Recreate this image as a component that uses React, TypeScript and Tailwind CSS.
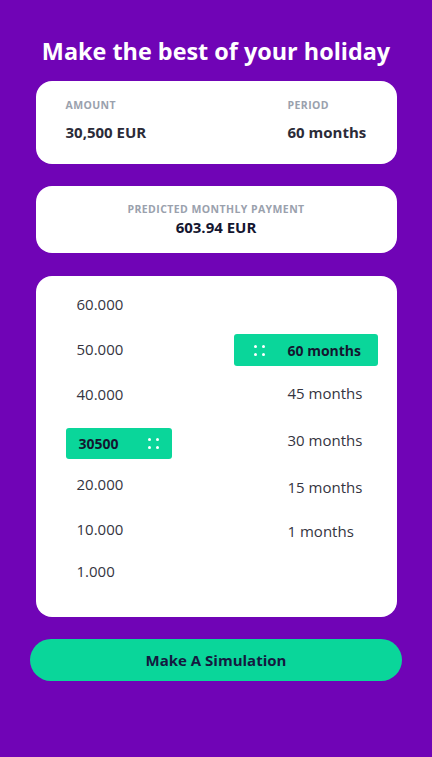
import React from "react";

const amounts = [
  { v: "60.000", h: "h-[45px]" },
  { v: "50.000", h: "h-[45px]" },
  { v: "40.000", h: "h-[45px]" },
  { v: "slider", h: "h-[45px]" },
  { v: "20.000", h: "h-[45px]" },
  { v: "10.000", h: "h-[45px]" },
  { v: "1.000", h: "h-[39px]" },
];

const periods = [
  { v: "45 months", h: "h-[42px]" },
  { v: "30 months", h: "h-[52px]" },
  { v: "15 months", h: "h-[42px]" },
  { v: "1 months", h: "h-[46px]" },
];

function Dots() {
  return (
    <div className="grid grid-cols-2 gap-x-[5px] gap-y-[5px]">
      <span className="block h-[3px] w-[3px] rounded-full bg-white" />
      <span className="block h-[3px] w-[3px] rounded-full bg-white" />
      <span className="block h-[3px] w-[3px] rounded-full bg-white" />
      <span className="block h-[3px] w-[3px] rounded-full bg-white" />
    </div>
  );
}

export default function App() {
  return (
    <div
      className="flex min-h-[757px] w-full flex-col items-center bg-[#7004b6] pt-[35px]"
      style={{ fontFamily: '"Open Sans", "Noto Sans", sans-serif' }}
    >
      <h1 className="text-[23.4px] font-bold leading-[32px] text-white">
        Make the best of your holiday
      </h1>

      {/* Amount / period summary */}
      <div className="mt-[14px] flex h-[83px] w-[361px] justify-between rounded-[16px] bg-white pl-[30px] pr-[32px] pt-[17px]">
        <div>
          <div className="text-[10.5px] font-bold uppercase tracking-[0.04em] text-[#9aa1ad]">Amount</div>
          <div className="mt-[7px] text-[15px] font-bold text-[#2b2b38]">30,500 EUR</div>
        </div>
        <div className="w-[77px] whitespace-nowrap">
          <div className="text-[10.5px] font-bold uppercase tracking-[0.04em] text-[#9aa1ad]">Period</div>
          <div className="mt-[7px] text-[15px] font-bold text-[#2b2b38]">60 months</div>
        </div>
      </div>

      {/* Predicted payment */}
      <div className="mt-[22px] flex h-[67px] w-[361px] flex-col items-center rounded-[16px] bg-white pt-[16px]">
        <div className="text-[10.5px] font-bold uppercase leading-[15px] tracking-[0.04em] text-[#9aa1ad]">
          Predicted monthly payment
        </div>
        <div className="text-[15px] font-bold leading-[20px] text-[#141630]">603.94 EUR</div>
      </div>

      {/* Sliders */}
      <div className="mt-[23px] flex h-[341px] w-[361px] rounded-[16px] bg-white pt-[6px]">
        <div className="ml-[30px] flex w-[106px] flex-col">
          {amounts.map((a) =>
            a.v === "slider" ? (
              <div key={a.v} className={`flex ${a.h} items-center pt-[8px]`}>
                <div className="flex h-[31px] w-[106px] items-center justify-between rounded-[3px] bg-[#0ad69a] pl-[13px] pr-[13px]">
                  <span className="text-[14px] font-bold text-[#141630]">30500</span>
                  <Dots />
                </div>
              </div>
            ) : (
              <div key={a.v} className={`flex ${a.h} items-center pl-[11px] text-[15px] text-[#35353f]`}>
                {a.v}
              </div>
            )
          )}
        </div>

        <div className="ml-auto mr-[19px] flex w-[144px] flex-col pt-[46px]">
          <div className="flex h-[44px] items-center">
            <div className="flex h-[32px] w-[144px] items-center rounded-[3px] bg-[#0ad69a] pl-[20px]">
              <Dots />
              <span className="ml-[23px] text-[14px] font-bold text-[#141630]">60 months</span>
            </div>
          </div>
          {periods.map((p) => (
            <div key={p.v} className={`flex ${p.h} items-center pl-[54px] text-[15px] text-[#35353f]`}>
              {p.v}
            </div>
          ))}
        </div>
      </div>

      <button
        type="button"
        className="mt-[22px] flex h-[42px] w-[372px] items-center justify-center rounded-full bg-[#0ad69a] text-[15px] font-bold text-[#141a40]"
      >
        Make A Simulation
      </button>
    </div>
  );
}
